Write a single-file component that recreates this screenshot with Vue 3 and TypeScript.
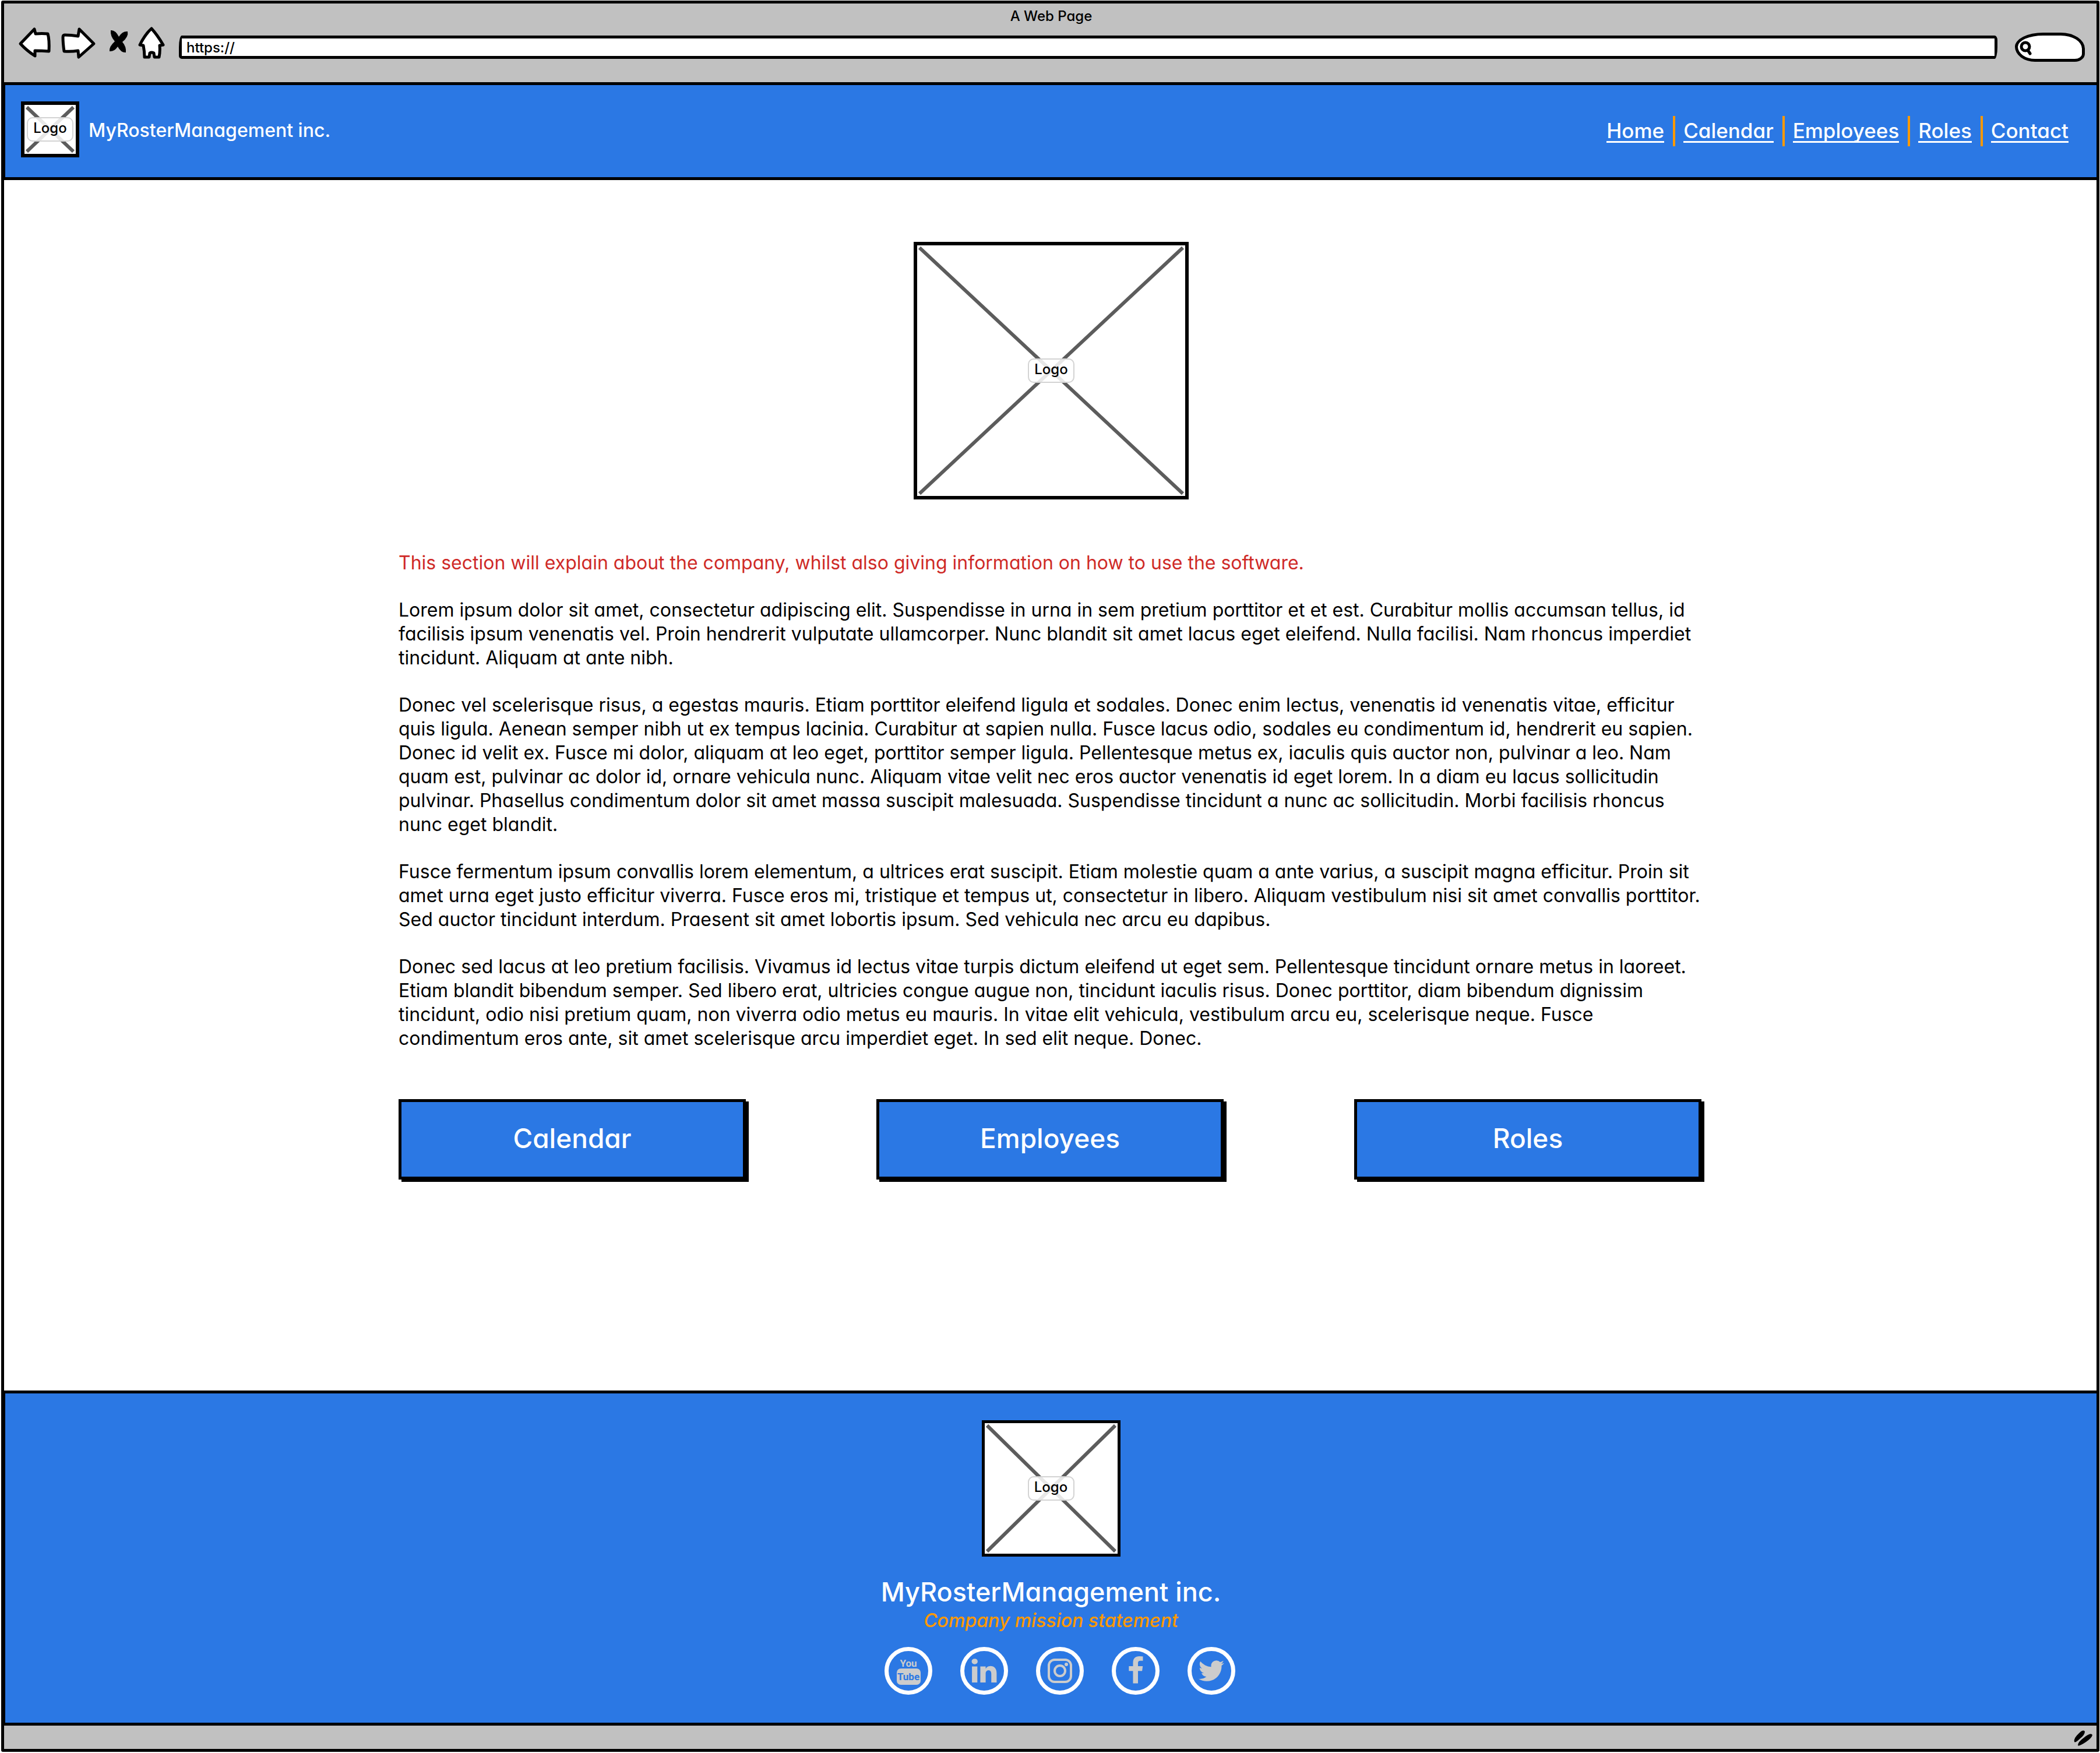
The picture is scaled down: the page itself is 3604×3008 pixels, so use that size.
<script setup lang="ts">
import { ref } from 'vue'

interface NavLink {
  label: string
  href: string
}

const address = ref('https://')
const query = ref('')

const navLinks: NavLink[] = [
  { label: 'Home', href: '#home' },
  { label: 'Calendar', href: '#calendar' },
  { label: 'Employees', href: '#employees' },
  { label: 'Roles', href: '#roles' },
  { label: 'Contact', href: '#contact' },
]

const shortcuts: string[] = ['Calendar', 'Employees', 'Roles']

const paragraphs: string[][] = [
  [
    'Lorem ipsum dolor sit amet, consectetur adipiscing elit. Suspendisse in urna in sem pretium porttitor et et est. Curabitur mollis accumsan tellus, id',
    'facilisis ipsum venenatis vel. Proin hendrerit vulputate ullamcorper. Nunc blandit sit amet lacus eget eleifend. Nulla facilisi. Nam rhoncus imperdiet',
    'tincidunt. Aliquam at ante nibh.',
  ],
  [
    'Donec vel scelerisque risus, a egestas mauris. Etiam porttitor eleifend ligula et sodales. Donec enim lectus, venenatis id venenatis vitae, efficitur',
    'quis ligula. Aenean semper nibh ut ex tempus lacinia. Curabitur at sapien nulla. Fusce lacus odio, sodales eu condimentum id, hendrerit eu sapien.',
    'Donec id velit ex. Fusce mi dolor, aliquam at leo eget, porttitor semper ligula. Pellentesque metus ex, iaculis quis auctor non, pulvinar a leo. Nam',
    'quam est, pulvinar ac dolor id, ornare vehicula nunc. Aliquam vitae velit nec eros auctor venenatis id eget lorem. In a diam eu lacus sollicitudin',
    'pulvinar. Phasellus condimentum dolor sit amet massa suscipit malesuada. Suspendisse tincidunt a nunc ac sollicitudin. Morbi facilisis rhoncus',
    'nunc eget blandit.',
  ],
  [
    'Fusce fermentum ipsum convallis lorem elementum, a ultrices erat suscipit. Etiam molestie quam a ante varius, a suscipit magna efficitur. Proin sit',
    'amet urna eget justo efficitur viverra. Fusce eros mi, tristique et tempus ut, consectetur in libero. Aliquam vestibulum nisi sit amet convallis porttitor.',
    'Sed auctor tincidunt interdum. Praesent sit amet lobortis ipsum. Sed vehicula nec arcu eu dapibus.',
  ],
  [
    'Donec sed lacus at leo pretium facilisis. Vivamus id lectus vitae turpis dictum eleifend ut eget sem. Pellentesque tincidunt ornare metus in laoreet.',
    'Etiam blandit bibendum semper. Sed libero erat, ultricies congue augue non, tincidunt iaculis risus. Donec porttitor, diam bibendum dignissim',
    'tincidunt, odio nisi pretium quam, non viverra odio metus eu mauris. In vitae elit vehicula, vestibulum arcu eu, scelerisque neque. Fusce',
    'condimentum eros ante, sit amet scelerisque arcu imperdiet eget. In sed elit neque. Donec.',
  ],
]
</script>

<template>
  <div class="window">
    <div class="chrome">
      <div class="title">A Web Page</div>
      <div class="toolbar">
        <div class="tools">
          <button type="button" class="tool" aria-label="Back">
            <svg width="60" height="78" viewBox="30 42 60 78">
              <path class="outline" d="M35 75 59 50 61 58Q72 57 82 58Q85 68 84 88Q72 87 60 87L60 96Q46 87 35 75Z" />
            </svg>
          </button>
          <button type="button" class="tool" aria-label="Forward">
            <svg width="64" height="78" viewBox="104 42 64 78">
              <path class="outline" d="M111 60Q122 60 134 62L136 50 161 75 135 98 134 87Q122 89 110 88Q108 74 108 64Q108 60 111 60Z" />
            </svg>
          </button>
          <button type="button" class="tool" aria-label="Stop">
            <svg width="42" height="78" viewBox="182 42 42 78">
              <path d="M190 52Q198 51 204 63Q210 53 219 54Q221 63 210 72Q217 80 216 90Q208 91 202 80Q196 89 188 88Q187 80 197 71Q189 62 190 52Z" />
            </svg>
          </button>
          <button type="button" class="tool" aria-label="Home">
            <svg width="46" height="78" viewBox="238 42 46 78">
              <path class="outline" d="M260 49Q270 60 280 77L274 78Q275 88 273 98L265 98 264 91Q260 89 257 91L256 98 248 98Q248 88 246 78L240 77Q249 59 260 49Z" />
            </svg>
          </button>
        </div>
        <input v-model="address" class="address" type="text" aria-label="Address" />
        <label class="search">
          <svg width="22" height="30" viewBox="0 0 22 30" aria-hidden="true">
            <ellipse cx="13" cy="14" rx="7" ry="7" />
            <path d="M17 20 21 26" />
          </svg>
          <input v-model="query" type="search" aria-label="Search" />
        </label>
      </div>
    </div>

    <header class="header">
      <div class="brand">
        <div class="picture picture-small">
          <svg aria-hidden="true"><line x1="0" y1="0" x2="100%" y2="100%" /><line x1="100%" y1="0" x2="0" y2="100%" /></svg>
          <span>Logo</span>
        </div>
        <span class="brand-name">MyRosterManagement inc.</span>
      </div>
      <nav class="nav">
        <a v-for="link in navLinks" :key="link.label" :href="link.href"><span>{{ link.label }}</span></a>
      </nav>
    </header>

    <main class="main">
      <div class="picture picture-large">
        <svg aria-hidden="true"><line x1="0" y1="0" x2="100%" y2="100%" /><line x1="100%" y1="0" x2="0" y2="100%" /></svg>
        <span>Logo</span>
      </div>
      <div class="copy">
        <p class="note">This section will explain about the company, whilst also giving information on how to use the software.</p>
        <p v-for="(lines, i) in paragraphs" :key="i">
          <template v-for="(line, j) in lines" :key="j">{{ line }}<br v-if="j < lines.length - 1" /></template>
        </p>
      </div>
      <div class="shortcuts">
        <button v-for="name in shortcuts" :key="name" type="button">{{ name }}</button>
      </div>
    </main>

    <footer class="footer">
      <div class="picture picture-medium">
        <svg aria-hidden="true"><line x1="0" y1="0" x2="100%" y2="100%" /><line x1="100%" y1="0" x2="0" y2="100%" /></svg>
        <span>Logo</span>
      </div>
      <div class="footer-name">MyRosterManagement inc.</div>
      <div class="mission">Company mission statement</div>
      <div class="social">
        <a href="#youtube" aria-label="YouTube">
          <svg width="50" height="50" viewBox="0 0 50 50">
            <text x="25" y="18" text-anchor="middle" class="you">You</text>
            <rect x="5" y="21" width="41" height="28" rx="7" />
            <text x="25" y="41" text-anchor="middle" class="tube">Tube</text>
          </svg>
        </a>
        <a href="#linkedin" aria-label="LinkedIn">
          <svg width="50" height="50" viewBox="0 0 1792 1792">
            <path d="M477 625v991h-330v-991h330zm21-306q1 73-50.500 122t-135.500 49h-2q-82 0-132-49t-50-122q0-74 51.500-122.500t134.500-48.500 133 48.500 51 122.500zm1166 729v568h-329v-530q0-105-40.500-164.500t-126.500-59.500q-63 0-105.500 34.500t-63.500 85.500q-11 30-11 81v553h-329q2-399 2-647t-1-296l-1-48h329v144h-2q20-32 41-56t56.500-52 87-43.500 114.500-15.500q171 0 275 113.500t104 332.500z" />
          </svg>
        </a>
        <a href="#instagram" aria-label="Instagram">
          <svg width="50" height="50" viewBox="0 0 50 50">
            <rect class="ring" x="6" y="6" width="38" height="38" rx="10" />
            <circle class="ring" cx="25" cy="25" r="9" />
            <circle cx="36" cy="14" r="3" />
          </svg>
        </a>
        <a href="#facebook" aria-label="Facebook">
          <svg width="50" height="50" viewBox="0 0 1792 1792">
            <path d="M1343 12v264h-157q-86 0-116 36t-30 108v189h293l-39 296h-254v759h-306v-759h-255v-296h255v-218q0-186 104-288.500t277-102.500q147 0 228 12z" />
          </svg>
        </a>
        <a href="#twitter" aria-label="Twitter">
          <svg width="50" height="50" viewBox="0 0 1792 1792">
            <path d="M1684 408q-67 98-162 167 1 14 1 42 0 130-38 259.500t-115.500 248.500-184.500 210.500-258 146-323 54.500q-271 0-496-145 35 4 78 4 225 0 401-138-105-2-188-64.500t-114-159.500q33 5 61 5 43 0 85-11-112-23-185.500-111.500t-73.500-205.500v-4q68 38 146 41-66-44-105-115t-39-154q0-88 44-163 121 149 294.500 238.500t371.500 99.500q-8-38-8-74 0-134 94.500-228.500t228.500-94.500q140 0 236 102 109-21 205-78-37 115-142 178 93-10 186-50z" />
          </svg>
        </a>
      </div>
    </footer>

    <div class="status">
      <svg width="40" height="32" viewBox="0 0 40 32" aria-hidden="true">
        <path d="M4 24Q2 18 12 9Q19 2 22 6Q22 12 14 18Q6 26 4 24Z" />
        <path d="M10 30Q10 24 20 17Q32 7 35 12Q34 17 24 24Q12 32 10 30Z" />
      </svg>
    </div>
  </div>
</template>

<style>
body {
  display: flow-root;
  background: #fff;
}
</style>

<style scoped>
.window,
.window * {
  box-sizing: border-box;
}

.window {
  display: flex;
  flex-direction: column;
  min-height: calc(100vh - 3px);
  margin: 1px 1px 2px 2px;
  border: 5px solid #000;
  border-radius: 3px;
  background: #fff;
  color: #000;
  font-family: Inter, 'Liberation Sans', sans-serif;
  font-feature-settings: 'cv11';
  font-size: 32px;
  font-weight: 500;
  line-height: 41px;
}

.window button,
.window input {
  font: inherit;
  font-feature-settings: inherit;
  color: inherit;
}

.chrome {
  padding: 8px 20px 21px 23px;
  background: #c1c1c1;
}

.title {
  font-size: 24px;
  line-height: 28px;
  text-align: center;
}

.toolbar {
  display: flex;
  align-items: center;
}

.tools {
  display: flex;
  gap: 14px;
  margin-right: 23px;
}

.tool {
  padding: 0;
  border: 0;
  background: none;
}

.tool svg {
  display: block;
  overflow: visible;
}

.outline {
  fill: #fff;
  stroke: #000;
  stroke-width: 5;
  stroke-linejoin: round;
}

.window .address {
  flex: 1;
  min-width: 0;
  height: 40px;
  margin-right: 30px;
  padding: 0 8px;
  border: 5px solid #000;
  border-radius: 5px 5px 5px 5px / 20px 8px 20px 5px;
  background: #fff;
  font-size: 24px;
}

.search {
  display: flex;
  align-items: center;
  width: 120px;
  height: 50px;
  border: 5px solid #000;
  border-radius: 56px 48px 20px 40px / 28px 32px 16px 30px;
  background: #fff;
}

.search svg {
  flex: none;
  overflow: visible;
  fill: none;
  stroke: #000;
  stroke-width: 5;
  stroke-linecap: round;
}

.search input {
  width: 70px;
  border: 0;
  background: none;
}

.header {
  display: flex;
  align-items: center;
  justify-content: space-between;
  height: 168px;
  padding: 0 48px 6px 27px;
  border: solid #000;
  border-width: 5px 0 5px 2px;
  background: #2b78e4;
  color: #fff;
}

.brand {
  display: flex;
  align-items: center;
  gap: 16px;
}

.brand-name {
  padding-top: 2px;
}

.nav {
  display: flex;
  padding-top: 6px;
  font-size: 35px;
  line-height: 36px;
}

.nav a {
  display: flex;
  align-items: center;
  height: 52px;
  color: inherit;
  text-decoration: none;
}

.nav a + a {
  margin-left: 15px;
  padding-left: 14px;
  border-left: 4px solid #ff9900;
}

.nav span {
  border-bottom: 3px solid #fff;
}

.picture {
  display: grid;
  grid-template: 100% / 100%;
  place-items: center;
  border: 6px solid #000;
  background: #fff;
  color: #000;
}

.picture > * {
  grid-area: 1 / 1;
}

.picture svg {
  width: calc(100% - 8px);
  height: calc(100% - 8px);
  overflow: visible;
}

.picture line {
  stroke: #5c5c5c;
  stroke-width: 6;
}

.picture span {
  z-index: 1;
  width: 80px;
  height: 42px;
  border: 2px solid #d3d3d3;
  border-radius: 10px;
  background: rgba(255, 255, 255, 0.85);
  font-size: 24px;
  line-height: 34px;
  text-align: center;
}

.picture-small {
  width: 100px;
  height: 96px;
}

.picture-large {
  width: 472px;
  height: 442px;
}

.picture-medium {
  width: 238px;
  height: 234px;
  border-width: 5px;
}

.main {
  display: flex;
  flex: 1;
  flex-direction: column;
  align-items: center;
  padding: 106px 0 80px 3px;
}

.copy {
  width: 2240px;
  max-width: 100%;
  margin-top: 88px;
  font-weight: 400;
}

.copy p {
  margin: 0 0 40px;
}

.copy .note {
  color: #cf2a27;
}

.shortcuts {
  display: flex;
  justify-content: space-between;
  width: 2240px;
  max-width: 100%;
  margin-top: 44px;
}

.window .shortcuts button {
  width: 596px;
  height: 138px;
  margin-right: 4px;
  padding: 0 0 4px;
  border: 5px solid #000;
  background: #2b78e4;
  box-shadow: 5px 4px 0 #000;
  color: #fff;
  font-size: 46px;
}

.footer {
  display: flex;
  flex-direction: column;
  align-items: center;
  padding: 46px 0 48px;
  border: solid #000;
  border-width: 5px 0 5px 2px;
  background: #2b78e4;
  color: #fff;
}

.footer-name {
  margin-top: 33px;
  font-size: 45px;
  line-height: 56px;
}

.mission {
  color: #ff9900;
  font-style: italic;
}

.social {
  display: flex;
  gap: 48px;
  margin-top: 25px;
  padding-left: 30px;
}

.social a {
  display: grid;
  place-items: center;
  width: 82px;
  height: 82px;
  border: 7px solid #fff;
  border-radius: 50%;
}

.social svg {
  fill: #ccc;
}

.social .ring {
  fill: none;
  stroke: #ccc;
  stroke-width: 4;
}

.you,
.tube {
  font-family: Roboto, 'Liberation Sans', sans-serif;
  font-size: 17px;
  font-weight: 700;
}

.tube {
  fill: #2b78e4;
}

.status {
  display: flex;
  align-items: center;
  justify-content: flex-end;
  height: 40px;
  padding-right: 2px;
  background: #c1c1c1;
}
</style>
